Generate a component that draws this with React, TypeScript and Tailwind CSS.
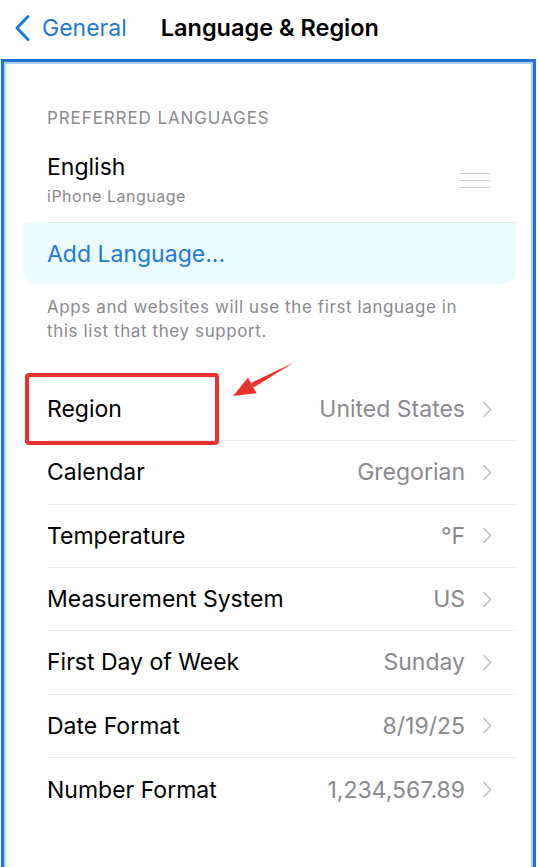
import React from "react";

const rows: { label: string; value: string }[] = [
  { label: "Region", value: "United States" },
  { label: "Calendar", value: "Gregorian" },
  { label: "Temperature", value: "°F" },
  { label: "Measurement System", value: "US" },
  { label: "First Day of Week", value: "Sunday" },
  { label: "Date Format", value: "8/19/25" },
  { label: "Number Format", value: "1,234,567.89" },
];

function Chevron() {
  return (
    <svg width="10" height="17" viewBox="0 0 10 17" className="shrink-0">
      <path d="M2 1.5 L8.5 8.5 L2 15.5" fill="none" stroke="#c4c4c7" strokeWidth="1.8" strokeLinecap="round" strokeLinejoin="round" />
    </svg>
  );
}

export default function App() {
  return (
    <div
      className="relative w-[538px] h-[867px] overflow-hidden bg-white"
      style={{ fontFamily: "Inter, 'Noto Sans', 'Liberation Sans', sans-serif" }}
    >
      {/* Nav bar */}
      <div className="flex h-[59px] items-center pb-[3px]">
        <svg width="20" height="28" viewBox="0 0 20 28" className="ml-[12px]">
          <path d="M16 2.5 L5 14 L16 25.5" fill="none" stroke="#1f78d9" strokeWidth="3" strokeLinecap="round" strokeLinejoin="round" />
        </svg>
        <span className="ml-[10px] text-[23px] leading-[28px] text-[#1f78d9]">General</span>
        <span className="ml-[34px] text-[23.5px] leading-[28px] font-semibold text-black">Language &amp; Region</span>
      </div>

      {/* Bordered screen */}
      <div className="ml-px mr-[2px] h-[820px] border-x-[3px] border-t-[3px] border-[#1f74d4] shadow-[inset_0_0_0_2px_#a9d2f6]">
        <div className="ml-[19px] mr-[17px] pt-[46px]">
          <div className="pl-[24px] text-[17px] leading-[20px] tracking-[0.9px] text-[#8a8a8e]">PREFERRED LANGUAGES</div>

          {/* Languages group */}
          <div className="mt-[25px]">
            <div className="ml-[24px] flex items-center border-b border-[#e5e5ea] pb-[16px]">
              <div className="flex-1">
                <div className="text-[23px] leading-[28px] text-black">English</div>
                <div className="mt-[5px] text-[16px] leading-[20px] tracking-[0.5px] text-[#8a8a8e]">iPhone Language</div>
              </div>
              <div className="mr-[26px] flex w-[30px] flex-col gap-[5.5px] pt-[2px]">
                <div className="h-[1.5px] bg-[#c9c9ce]" />
                <div className="h-[1.5px] bg-[#c9c9ce]" />
                <div className="h-[1.5px] bg-[#c9c9ce]" />
              </div>
            </div>
            <div className="flex h-[61px] items-center rounded-b-[14px] bg-[#eafcfe] pl-[24px]">
              <span className="text-[23px] leading-[28px] text-[#1f78d9]">Add Language...</span>
            </div>
          </div>

          <div className="mt-[12px] pl-[24px] text-[17px] leading-[23.5px] tracking-[0.6px] text-[#8a8a8e]">
            Apps and websites will use the first language in
            <br />
            this list that they support.
          </div>

          {/* Settings group */}
          <div className="mt-[35px]">
            {rows.map((r, i) => (
              <div key={r.label} className="pl-[24px]">
                <div
                  className={
                    "flex h-[63.33px] items-center pr-[24px] " +
                    (i < rows.length - 1 ? "border-b border-[#e9e9ee]" : "")
                  }
                >
                  <span className="flex-1 text-[23px] leading-[28px] text-black">{r.label}</span>
                  <span className="text-[23px] leading-[28px] text-[#8a8a8e]">{r.value}</span>
                  <span className="ml-[17px]">
                    <Chevron />
                  </span>
                </div>
              </div>
            ))}
          </div>
        </div>
      </div>

      {/* Red annotation box */}
      <div className="absolute left-[25px] top-[373px] h-[72px] w-[194px] rounded-[4px] border-[4px] border-[#e8322b]" />

      {/* Red arrow */}
      <svg className="absolute left-[225px] top-[355px]" width="75" height="50" viewBox="225 355 75 50">
        <polygon points="294,362.5 253.6,387.6 251,383" fill="#e8322b" />
        <polygon points="233,396 248,377.5 256.6,393.3" fill="#e8322b" />
      </svg>
    </div>
  );
}
